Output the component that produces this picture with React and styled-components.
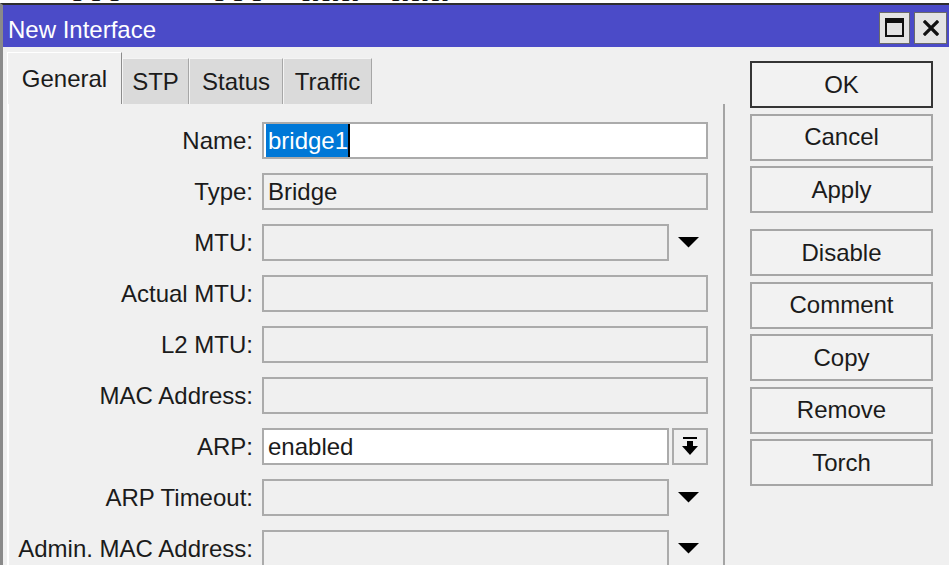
import React from "react";
import styled, { createGlobalStyle } from "styled-components";

const Global = createGlobalStyle`
  html, body { margin: 0; padding: 0; background: #fff; }
  body { overflow: hidden; }
`;

const Page = styled.div`
  width: 949px;
  height: 565px;
  overflow: hidden;
  background: #fff;
  font-family: "Liberation Sans", Arial, sans-serif;
  color: #1b1b1b;
  display: flex;
  flex-direction: column;
`;

const TopStrip = styled.div`
  height: 3px;
  flex-shrink: 0;
  overflow: hidden;
  display: flex;
  align-items: flex-end;
  background: #fff;
`;

const Frag = styled.span`
  font-family: "Liberation Serif", serif;
  font-weight: bold;
  font-size: 22px;
  line-height: 22px;
  letter-spacing: 4px;
  margin-left: ${(p) => p.$ml}px;
  margin-bottom: -2px;
  color: #111;
`;

const Window = styled.div`
  flex: 1;
  min-height: 0;
  overflow: hidden;
  display: flex;
  flex-direction: column;
  border-top: 2px solid #2e2e2e;
  border-left: 3px solid #8a8a8a;
  background: #f0f0f0;
`;

const TitleBar = styled.div`
  height: 42px;
  flex-shrink: 0;
  box-sizing: border-box;
  background: #4b4bc8;
  color: #fff;
  font-size: 24px;
  display: flex;
  align-items: center;
  padding: 4px 2px 0 5px;
`;

const Title = styled.span`
  flex: 1;
  margin-top: 4px;
`;

const WinButtons = styled.div`
  display: flex;
  gap: 4px;
  margin-top: -1px;
`;

const WinButton = styled.div`
  width: ${(p) => p.$w}px;
  height: 32px;
  box-sizing: border-box;
  background: #e4e4e4;
  border: 1px solid #6a6a6a;
  display: flex;
  align-items: center;
  justify-content: center;
`;

const Body = styled.div`
  flex: 1;
  display: flex;
  align-items: flex-start;
`;

const LeftPane = styled.div`
  width: 722px;
  padding-left: 4px;
  box-sizing: border-box;
  display: flex;
  flex-direction: column;
  flex-shrink: 0;
`;

const TabBar = styled.div`
  margin-top: 5px;
  height: 52px;
  display: flex;
  align-items: flex-end;
`;

const Tab = styled.div`
  width: ${(p) => p.$w}px;
  height: ${(p) => (p.$active ? 52 : 46)}px;
  box-sizing: border-box;
  background: ${(p) => (p.$active ? "#f0f0f0" : "#dadada")};
  border-top: 1px solid ${(p) => (p.$active ? "#ffffff" : "#f4f4f4")};
  border-left: 1px solid ${(p) => (p.$active ? "#ffffff" : "#f4f4f4")};
  border-right: 1px solid ${(p) => (p.$active ? "#8c8c8c" : "#a6a6a6")};
  font-size: 24px;
  display: flex;
  align-items: center;
  justify-content: center;
`;

const TabPanel = styled.div`
  width: 718px;
  box-sizing: border-box;
  border-left: 2px solid #ffffff;
  border-right: 2px solid #a4a4a4;
  padding: 18px 0 20px;
  display: flex;
  flex-direction: column;
  gap: 14px;
`;

const Row = styled.div`
  display: flex;
  align-items: center;
  height: 37px;
`;

const Label = styled.div`
  width: 244px;
  margin-right: 9px;
  text-align: right;
  font-size: 24px;
  white-space: nowrap;
`;

const Field = styled.div`
  width: ${(p) => p.$w}px;
  height: 37px;
  box-sizing: border-box;
  border: 2px solid #ababab;
  background: ${(p) => (p.$white ? "#ffffff" : "#f0f0f0")};
  font-size: 24px;
  display: flex;
  align-items: center;
  padding-left: ${(p) => (p.$sel ? 2 : 4)}px;
`;

const Selected = styled.span`
  background: #0078d7;
  color: #fff;
  padding-left: 2px;
  height: 33px;
  line-height: 33px;
  display: inline-flex;
  align-items: center;
  border-right: 2px solid #000;
`;

const ArrowCell = styled.div`
  width: 39px;
  height: 37px;
  display: flex;
  align-items: center;
  justify-content: center;
`;

const SmallButton = styled.div`
  margin-left: 3px;
  width: 36px;
  height: 37px;
  box-sizing: border-box;
  border: 2px solid #ababab;
  background: #f0f0f0;
  display: flex;
  align-items: center;
  justify-content: center;
`;

const RightPane = styled.div`
  padding: 14px 0 0 25px;
  display: flex;
  flex-direction: column;
`;

const ButtonGroup = styled.div`
  display: flex;
  flex-direction: column;
  gap: 5.5px;
  margin-bottom: ${(p) => p.$mb || 0}px;
`;

const Button = styled.div`
  width: 183px;
  height: 47px;
  box-sizing: border-box;
  border: 2px solid ${(p) => (p.$default ? "#353535" : "#a6a6a6")};
  background: #f2f2f2;
  font-size: 24px;
  display: flex;
  align-items: center;
  justify-content: center;
`;

const DownArrow = () => (
  <svg width="21" height="11" viewBox="0 0 21 11">
    <polygon points="0,0 21,0 10.5,10.5" fill="#000" />
  </svg>
);

const BarArrow = () => (
  <svg width="16" height="20" viewBox="0 0 16 20">
    <rect x="1" y="0" width="14" height="2" fill="#000" />
    <rect x="5" y="4" width="6" height="6" fill="#000" />
    <polygon points="0,9 16,9 8,18" fill="#000" />
  </svg>
);

const MaxIcon = () => (
  <svg width="19" height="19" viewBox="0 0 19 19">
    <rect x="1" y="1" width="17" height="17" fill="none" stroke="#111" strokeWidth="2" />
    <rect x="1" y="1" width="17" height="4" fill="#111" />
  </svg>
);

const CloseIcon = () => (
  <svg width="16" height="16" viewBox="0 0 16 16">
    <path d="M2 2 L14 14 M14 2 L2 14" stroke="#111" strokeWidth="3.2" strokeLinecap="square" />
  </svg>
);

const rows = [
  { label: "Name:", kind: "name" },
  { label: "Type:", kind: "text", value: "Bridge" },
  { label: "MTU:", kind: "drop" },
  { label: "Actual MTU:", kind: "text" },
  { label: "L2 MTU:", kind: "text" },
  { label: "MAC Address:", kind: "text" },
  { label: "ARP:", kind: "arp", value: "enabled" },
  { label: "ARP Timeout:", kind: "drop" },
  { label: "Admin. MAC Address:", kind: "drop" },
];

function FormRow({ row }) {
  return (
    <Row>
      <Label>{row.label}</Label>
      {row.kind === "name" && (
        <Field $w={446} $white $sel>
          <Selected>bridge1</Selected>
        </Field>
      )}
      {row.kind === "text" && <Field $w={446}>{row.value}</Field>}
      {row.kind === "drop" && (
        <>
          <Field $w={407}>{row.value}</Field>
          <ArrowCell>
            <DownArrow />
          </ArrowCell>
        </>
      )}
      {row.kind === "arp" && (
        <>
          <Field $w={407} $white>
            {row.value}
          </Field>
          <SmallButton>
            <BarArrow />
          </SmallButton>
        </>
      )}
    </Row>
  );
}

export default function App() {
  return (
    <Page>
      <Global />
      <TopStrip>
        <Frag $ml={70}>TTT</Frag>
        <Frag $ml={86}>TTT</Frag>
        <Frag $ml={34}>RRR</Frag>
        <Frag $ml={30}>RRR</Frag>
      </TopStrip>
      <Window>
        <TitleBar>
          <Title>New Interface</Title>
          <WinButtons>
            <WinButton $w={31}>
              <MaxIcon />
            </WinButton>
            <WinButton $w={33}>
              <CloseIcon />
            </WinButton>
          </WinButtons>
        </TitleBar>
        <Body>
          <LeftPane>
            <TabBar>
              <Tab $active $w={115}>General</Tab>
              <Tab $w={67}>STP</Tab>
              <Tab $w={94}>Status</Tab>
              <Tab $w={89}>Traffic</Tab>
            </TabBar>
            <TabPanel>
              {rows.map((r) => (
                <FormRow key={r.label} row={r} />
              ))}
            </TabPanel>
          </LeftPane>
          <RightPane>
            <ButtonGroup $mb={16}>
              <Button $default>OK</Button>
              <Button>Cancel</Button>
              <Button>Apply</Button>
            </ButtonGroup>
            <ButtonGroup>
              <Button>Disable</Button>
              <Button>Comment</Button>
              <Button>Copy</Button>
              <Button>Remove</Button>
              <Button>Torch</Button>
            </ButtonGroup>
          </RightPane>
        </Body>
      </Window>
    </Page>
  );
}
